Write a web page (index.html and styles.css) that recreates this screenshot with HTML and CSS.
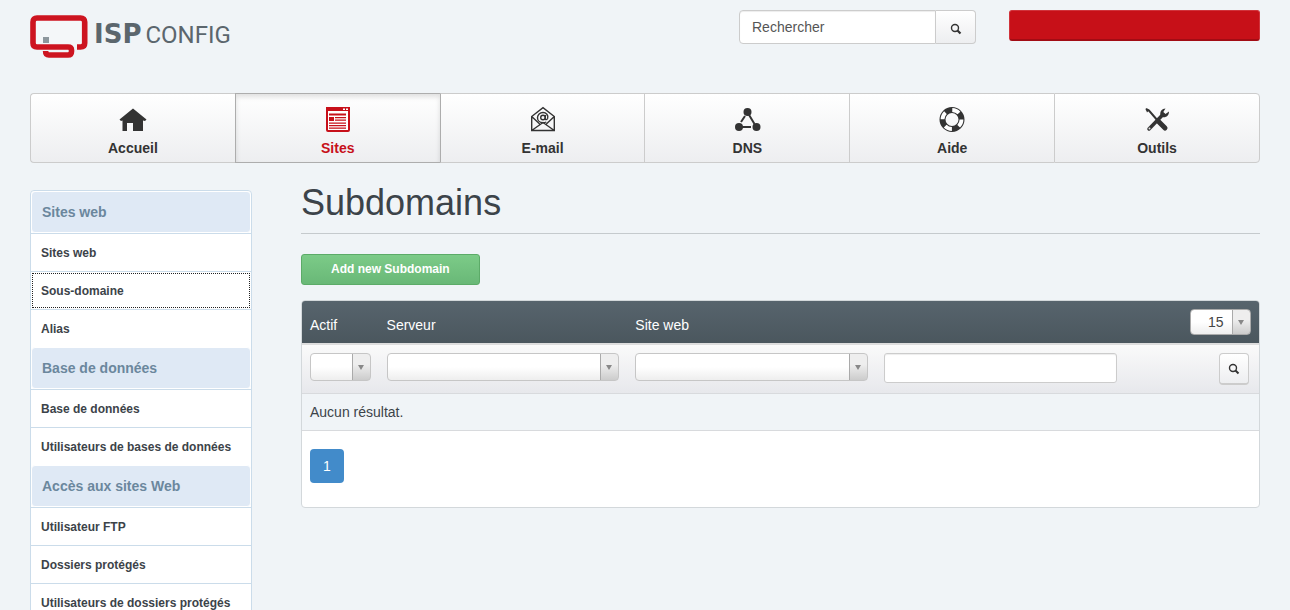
FILE: index.html
```html
<!DOCTYPE html>
<html lang="fr">
<head>
    <meta charset="UTF-8">
    <meta name="viewport" content="width=device-width, initial-scale=1.0">
    <title>ISPConfig</title>
    <link rel="stylesheet" href="styles.css">
</head>
<body>

    <header class="header">
        <a class="logo" href="#">
            <svg width="58" height="43" viewBox="0 0 58 43" aria-hidden="true">
                <rect x="3" y="3" width="51" height="29" fill="#f4f7f9"/>
                <path d="M47 32h3.5q4.2 0 4.2-4V7q0-4-4.2-4H7Q3 3 3 7v21q0 4 4 4h31q3.5 0 3.5 3v1.500q0 3.500-3.500 3.500H19q-3.400 0-3.400-4" fill="none" stroke="#cd1420" stroke-width="5.600"/>
                <rect x="13" y="22" width="6" height="6" fill="#8d979d"/>
            </svg>
            <span class="logo-text"><b>ISP</b>CONFIG</span>
        </a>
        <form class="search">
            <input type="text" placeholder="Rechercher" aria-label="Rechercher">
            <button type="button" aria-label="Lancer la recherche">
                <svg width="12" height="12" viewBox="0 0 12 12"><circle cx="5" cy="5" r="3.500" fill="none" stroke="#333" stroke-width="1.400"/><path d="M7.500 7.500l3 3" stroke="#333" stroke-width="2.200"/></svg>
            </button>
        </form>
        <button type="button" class="logout" aria-label="Se déconnecter"></button>
    </header>

    <nav class="main-nav">
        <a href="#">
            <svg width="28" height="28" viewBox="0 0 28 28"><path d="M14 2.500L.500 13.500 2 15l1.500-.500V25H8v-8h6v8h10V14.500L26 15l1.500-1.500-4-3.300z" fill="#333"/></svg>
            <span>Accueil</span>
        </a>
        <a href="#" class="active">
            <svg width="28" height="28" viewBox="0 0 28 28">
                <rect x="3" y="2" width="22" height="23" rx="1" fill="#fff" stroke="#c7101a" stroke-width="2"/>
                <path d="M2 1h24v4H2zM5 7.500h17v2H5zM5 11h5v4H5zM11 11h11v1.200H11zM11 13.500h11v1.200H11zM5 16.500h17v1.200H5zM5 19h17v1.200H5zM5 21.500h17v1.200H5z" fill="#c7101a"/>
                <path d="M19 2.500h2v1.500h-2zM22 2.500h2v1.500h-2z" fill="#fff"/>
            </svg>
            <span>Sites</span>
        </a>
        <a href="#">
            <svg width="28" height="28" viewBox="0 0 28 28" fill="none" stroke="#333" stroke-width="1.400">
                <path d="M2.700 10.500L14 1.700l11.300 8.800v14H2.700zM2.700 10.500l8 7.500M25.300 10.500l-8 7.500M2.700 24.500L14 16.500l11.300 8"/>
                <circle cx="14" cy="11.500" r="2.300"/>
                <path d="M16.500 9l-.500 4q1.500 1.500 2.600-.500c1.200-3.500-1.600-6-4.600-6s-5.500 2.200-5.500 5.200 2.500 5 5.500 5q2 0 3.300-.700"/>
            </svg>
            <span>E-mail</span>
        </a>
        <a href="#">
            <svg width="28" height="28" viewBox="0 0 28 28" fill="#333">
                <circle cx="14.500" cy="6" r="4"/><circle cx="6" cy="21" r="4"/><circle cx="23.500" cy="21" r="4"/>
                <path d="M12 10L8 16M15.500 8l6 10M9 21h9" stroke="#333" stroke-width="2"/>
            </svg>
            <span>DNS</span>
        </a>
        <a href="#">
            <svg width="28" height="28" viewBox="0 0 28 28" fill="none">
                <circle cx="14" cy="13.500" r="9.500" stroke="#333" stroke-width="6"/>
                <circle cx="14" cy="13.500" r="9.500" stroke="#fff" stroke-width="3.800" stroke-dasharray="7.460 7.460"/>
            </svg>
            <span>Aide</span>
        </a>
        <a href="#">
            <svg width="28" height="28" viewBox="0 0 28 28">
                <path d="M3 3l3 1.500L15 15" stroke="#333" stroke-width="2" fill="none"/>
                <path d="M2.500 2.500l4 1.500-2.500 2.500z" fill="#333"/>
                <path d="M16 16l6 6" stroke="#333" stroke-width="5" stroke-linecap="round"/>
                <path d="M6 23L20 8.500" stroke="#333" stroke-width="3.500" stroke-linecap="round"/>
                <path d="M22.500 2.500c-3.500 0-6 3-5 7 3 3.500 8.500 1.500 8.500-4l-3.500 2.500-2.200-2z" fill="#333"/>
                <circle cx="6.500" cy="22.500" r="1" fill="#ddd"/>
            </svg>
            <span>Outils</span>
        </a>
    </nav>

    <div class="content">
        <aside class="sidebar">
            <h2>Sites web</h2>
            <ul>
                <li><a href="#">Sites web</a></li>
                <li><a href="#" class="current">Sous-domaine</a></li>
                <li><a href="#">Alias</a></li>
            </ul>
            <h2>Base de données</h2>
            <ul>
                <li><a href="#">Base de données</a></li>
                <li><a href="#">Utilisateurs de bases de données</a></li>
            </ul>
            <h2>Accès aux sites Web</h2>
            <ul>
                <li><a href="#">Utilisateur FTP</a></li>
                <li><a href="#">Dossiers protégés</a></li>
                <li><a href="#">Utilisateurs de dossiers protégés</a></li>
            </ul>
        </aside>

        <main class="main">
            <h1>Subdomains</h1>
            <button type="button" class="btn-add">Add new Subdomain</button>

            <div class="panel">
                <table>
                    <colgroup>
                        <col class="col-active">
                        <col class="col-field">
                        <col class="col-field">
                        <col class="col-field">
                        <col>
                    </colgroup>
                    <thead>
                        <tr>
                            <th>Actif</th>
                            <th>Serveur</th>
                            <th>Site web</th>
                            <th></th>
                            <th class="limit">
                                <select aria-label="Résultats par page">
                                    <option>15</option>
                                    <option>25</option>
                                    <option>50</option>
                                </select>
                            </th>
                        </tr>
                        <tr class="filters">
                            <td><select aria-label="Actif"><option></option></select></td>
                            <td><select aria-label="Serveur"><option></option></select></td>
                            <td><select aria-label="Site web"><option></option></select></td>
                            <td><input type="text" aria-label="Sous-domaine"></td>
                            <td class="filter-action">
                                <button type="button" aria-label="Filtrer">
                                    <svg width="12" height="12" viewBox="0 0 12 12"><circle cx="5" cy="5" r="3.500" fill="none" stroke="#333" stroke-width="1.400"/><path d="M7.500 7.500l3 3" stroke="#333" stroke-width="2"/></svg>
                                </button>
                            </td>
                        </tr>
                    </thead>
                    <tbody>
                        <tr>
                            <td colspan="5">Aucun résultat.</td>
                        </tr>
                    </tbody>
                </table>
                <div class="pagination">
                    <a href="#">1</a>
                </div>
            </div>
        </main>
    </div>

</body>
</html>
```
FILE: styles.css
```css
* {
    box-sizing: border-box;
}
body {
    margin: 0;
    padding: 10px 30px 0;
    background-color: #f0f4f7;
    color: #3c4349;
    font-family: "Liberation Sans", Arial, sans-serif;
    font-size: 14px;
    line-height: 20px;
}
a {
    color: inherit;
    text-decoration: none;
}
input,
select,
button {
    font-family: inherit;
    font-size: 14px;
}
button {
    cursor: pointer;
}

/* Header */
.header {
    display: flex;
    align-items: flex-start;
    height: 83px;
}
.logo {
    display: flex;
    gap: 6px;
    margin-right: auto;
    padding-top: 5px;
}
.logo-text {
    padding-top: 7px;
    color: #5b666d;
    font-family: Roboto, sans-serif;
    font-size: 24px;
    line-height: 24px;
}
.logo-text b {
    margin-right: 4px;
    font-family: "DejaVu Sans", sans-serif;
    font-size: 26px;
}
.search {
    display: flex;
    margin-right: 33px;
}
.search input {
    width: 197px;
    height: 34px;
    padding: 6px 12px;
    border: 1px solid #ccc;
    border-radius: 4px 0 0 4px;
    background-color: #fff;
    box-shadow: inset 0 1px 1px rgba(0, 0, 0, 0.075);
}
.search input::placeholder {
    color: #555;
}
.search button {
    width: 40px;
    height: 34px;
    padding: 5px 0 0;
    border: 1px solid #ccc;
    border-left: 0;
    border-radius: 0 4px 4px 0;
    background: linear-gradient(#fff, #edeef0);
}
.logout {
    width: 251px;
    height: 31px;
    border: 1px solid #d0333b;
    border-bottom: 2px solid #a20c14;
    border-radius: 3px;
    background-color: #c71018;
}

/* Main navigation */
.main-nav {
    display: flex;
}
.main-nav a {
    display: flex;
    flex: 1;
    flex-direction: column;
    align-items: center;
    gap: 4px;
    padding: 12px 0 4px;
    border: 1px solid #ccc;
    border-right: 0;
    background: linear-gradient(#fff, #edeef0);
    color: #333;
    font-weight: bold;
}
.main-nav a:first-child {
    border-radius: 4px 0 0 4px;
}
.main-nav a:last-child {
    border-right: 1px solid #ccc;
    border-radius: 0 4px 4px 0;
}
.main-nav .active {
    border-color: #adadad;
    box-shadow: inset 0 3px 5px rgba(0, 0, 0, 0.125);
    color: #c7101a;
}
.main-nav .active + a {
    border-left-color: #adadad;
}

/* Content */
.content {
    display: flex;
    gap: 49px;
    padding-top: 27px;
}
.sidebar {
    flex: 0 0 222px;
    border: 1px solid #cbdcea;
    border-radius: 4px;
    background-color: #fff;
}
.sidebar h2 {
    margin: 0;
    padding: 10px;
    border: 1px solid #fff;
    border-radius: 4px;
    background-color: #dfe9f5;
    color: #6b879d;
    font-size: 14px;
    line-height: 20px;
}
.sidebar ul {
    margin: 0;
    padding: 0;
    list-style: none;
}
.sidebar li {
    border-top: 1px solid #cbdcea;
}
.sidebar li a {
    display: block;
    padding: 11px 10px 9px;
    font-size: 12px;
    font-weight: bold;
    line-height: 17px;
}
.sidebar .current {
    outline: 1px dotted #222;
    outline-offset: -2px;
}
.main {
    flex: 1;
    min-width: 0;
}
h1 {
    margin: -7px 0 20px;
    padding: 0 0 10px;
    border-bottom: 1px solid #c5cacd;
    font-size: 36px;
    font-weight: normal;
    line-height: 40px;
}
.btn-add {
    display: block;
    height: 31px;
    margin-bottom: 15px;
    padding: 0 29px 2px;
    border: 1px solid #5cab68;
    border-radius: 3px;
    background: linear-gradient(#7ccb88, #69b877);
    color: #fff;
    font-size: 12px;
    font-weight: bold;
}

/* List */
.panel {
    border: 1px solid #d3d8db;
    border-radius: 4px;
    background-color: #fff;
    overflow: hidden;
}
table {
    width: 100%;
    table-layout: fixed;
    border-collapse: separate;
    border-spacing: 0;
}
.col-active {
    width: 8%;
}
.col-field {
    width: 26%;
}
thead tr {
    background: linear-gradient(#57646d, #4a565d);
}
th,
td {
    padding: 8px;
    text-align: left;
    vertical-align: top;
}
th {
    padding-top: 14px;
    border-bottom: 2px solid #ddd;
    color: #fff;
    font-weight: normal;
}
.limit {
    padding-top: 8px;
    text-align: right;
}
thead .filters {
    background: linear-gradient(#fafafa, #e7e8ec);
}
select {
    appearance: none;
    display: block;
    width: 100%;
    height: 28px;
    padding: 0 20px 0 8px;
    border: 1px solid #c6c6c6;
    border-radius: 4px;
    background:
        url("data:image/svg+xml,%3Csvg xmlns='http://www.w3.org/2000/svg' width='6' height='5'%3E%3Cpath d='M0 0h6L3 5z' fill='%23888'/%3E%3C/svg%3E") right 6px center no-repeat,
        linear-gradient(#aaa, #aaa) right 17px top / 1px 100% no-repeat,
        linear-gradient(#eee 40%, #ccc) right top / 17px 100% no-repeat,
        linear-gradient(#fff 50%, #eee);
    color: #444;
}
.limit select {
    width: 61px;
    height: 26px;
    margin-left: auto;
    padding-left: 17px;
    border-color: #aaa;
}
.filters input {
    display: block;
    width: 100%;
    height: 30px;
    padding: 5px 10px;
    border: 1px solid #ccc;
    border-radius: 3px;
    box-shadow: inset 0 1px 1px rgba(0, 0, 0, 0.075);
}
.filters .filter-action {
    padding-right: 10px;
}
.filters button {
    display: block;
    width: 30px;
    height: 32px;
    margin-left: auto;
    padding: 2px 0 0;
    border: 1px solid #ccc;
    border-bottom-width: 2px;
    border-radius: 4px;
    background: linear-gradient(#fff, #edeef0);
}
tbody td {
    border-top: 1px solid #d8dadd;
    border-bottom: 1px solid #d8dadd;
    background-color: #f0f4f7;
}
.pagination {
    display: flex;
    padding: 18px 8px 24px;
}
.pagination a {
    padding: 7px 13px;
    border-radius: 4px;
    background-color: #428bca;
    color: #fff;
}
```
